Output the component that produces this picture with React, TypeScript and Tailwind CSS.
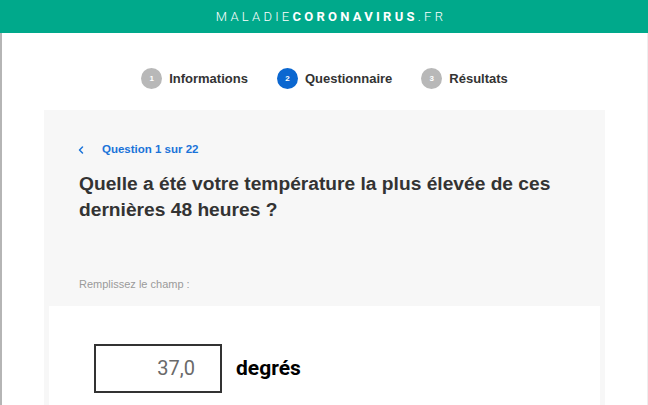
import { ChevronLeft } from 'lucide-react';

const STEPS = [
  { n: 1, label: 'Informations', active: false },
  { n: 2, label: 'Questionnaire', active: true },
  { n: 3, label: 'Résultats', active: false },
];

export default function App() {
  return (
    <div className="h-[405px] w-[648px] overflow-hidden bg-white font-['Liberation_Sans',Arial,sans-serif]">
      {/* bandeau */}
      <header className="flex h-[33px] items-center justify-center bg-[#00a98b] pl-[14px] font-['Roboto',sans-serif] text-[13px] tracking-[0.25em] text-white">
        <span className="font-light">MALADIE</span>
        <span className="font-bold">CORONAVIRUS</span>
        <span className="font-light">.FR</span>
      </header>

      <div className="h-[372px] border-l-2 border-r border-l-[#b5b5b5] border-r-[#eeeeee]">
        {/* étapes */}
        <nav className="flex h-[77px] items-center justify-center gap-[29px] pt-[14px]">
          {STEPS.map(s => (
            <div key={s.n} className="flex items-center gap-[7px]">
              <span
                className={
                  s.active
                    ? 'flex h-[21px] w-[21px] items-center justify-center rounded-full bg-[#0b67d0] text-[8px] font-bold text-white'
                    : 'flex h-[21px] w-[21px] items-center justify-center rounded-full bg-[#b8b8b8] text-[8px] font-bold text-white'
                }
              >
                {s.n}
              </span>
              <span className="text-[13px] font-bold text-[#333333]">{s.label}</span>
            </div>
          ))}
        </nav>

        {/* question */}
        <section className="mx-[42px] h-[300px] bg-[#f7f7f7] pt-[31px]">
          <div className="px-[35px]">
            <div className="flex items-center gap-[15px] text-[11.5px] font-bold text-[#1a73d9]">
              <ChevronLeft size={12} strokeWidth={3} className="-ml-[4px]" />
              <span>Question 1 sur 22</span>
            </div>
            <h1 className="mt-[13px] text-[19.2px] font-bold leading-[26px] text-[#333333]">
              Quelle a été votre température la plus élevée de ces dernières 48 heures ?
            </h1>
            <p className="mt-[53px] text-[11px] text-[#9a9a9a]">Remplissez le champ :</p>
          </div>

          <div className="mx-[5px] mt-[13px] h-[120px] bg-white px-[45px] pt-[38px]">
            <div className="flex items-center gap-[14px]">
              <div className="flex h-[49px] w-[128px] items-center justify-end border-2 border-[#333333] pr-[25px] font-['Roboto',sans-serif] text-[20px] text-[#6a6a6a]">
                37,0
              </div>
              <span className="font-['Roboto',sans-serif] text-[21px] font-bold text-black">degrés</span>
            </div>
          </div>
        </section>
      </div>
    </div>
  );
}
